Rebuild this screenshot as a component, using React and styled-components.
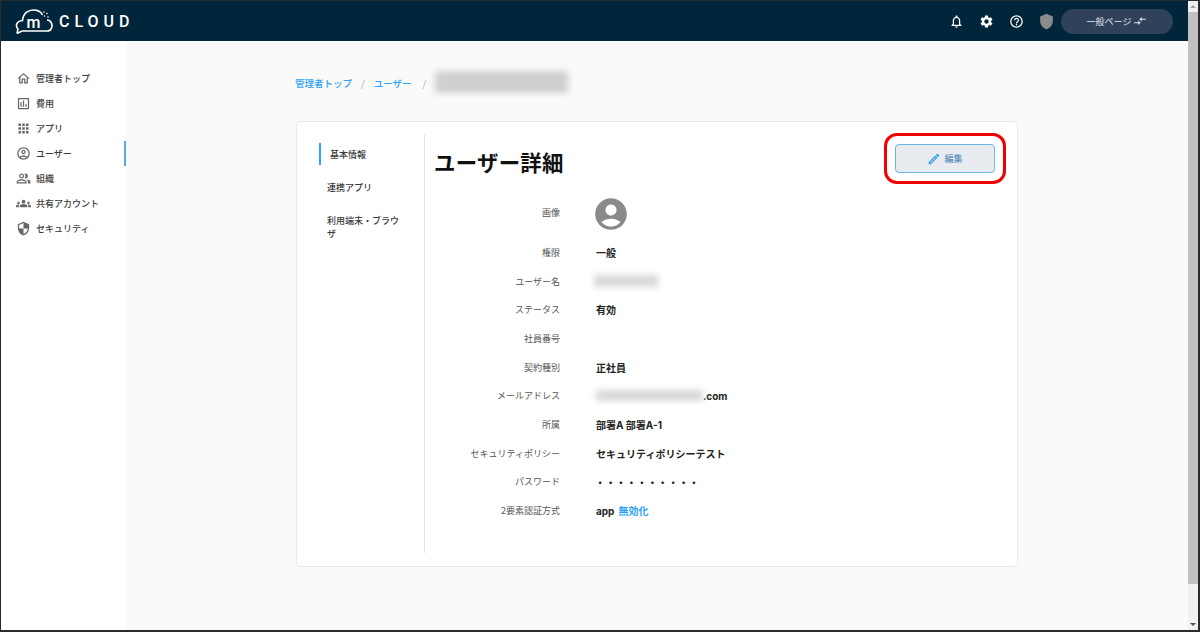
import styled, { createGlobalStyle } from "styled-components";
import {
  MdOutlineHome,
  MdOutlineAssessment,
  MdApps,
  MdOutlineAccountCircle,
  MdOutlinePeopleAlt,
  MdGroups,
  MdSecurity,
  MdOutlineNotifications,
  MdSettings,
  MdHelpOutline,
  MdShield,
  MdCompareArrows,
  MdOutlineEdit,
  MdAccountCircle,
} from "react-icons/md";

const GlobalStyle = createGlobalStyle`
  html, body { margin: 0; padding: 0; background: #fff; }
  body {
    font-family: "Noto Sans CJK JP", "Noto Sans", "Liberation Sans", sans-serif;
    overflow: hidden;
  }
  * { box-sizing: border-box; }
`;

const Frame = styled.div`
  width: 1200px;
  height: 632px;
  display: flex;
  border-style: solid;
  border-color: #2b2b2b;
  border-width: 1px 2px 2px 1px;
  overflow: hidden;
`;

const Page = styled.div`
  flex: 1;
  min-width: 0;
  display: flex;
  flex-direction: column;
`;

const Scrollbar = styled.div`
  width: 10px;
  display: flex;
  flex-direction: column;
  align-items: center;
  background: #f1f1f1;
`;

const ScrollArrow = styled.div`
  height: 11px;
  display: flex;
  align-items: center;
  justify-content: center;
  margin-top: ${(props) => (props.$down ? "auto" : "0")};

  &::before {
    content: "";
    border-left: 3px solid transparent;
    border-right: 3px solid transparent;
    ${(props) =>
      props.$down
        ? "border-top: 3px solid #505050;"
        : "border-bottom: 3px solid #a3a3a3;"}
  }
`;

const ScrollThumb = styled.div`
  width: 100%;
  height: 572px;
  background: #c1c1c1;
`;

const Header = styled.header`
  height: 40px;
  flex: none;
  background: #01263c;
  display: flex;
  align-items: center;
  padding: 0 15px 0 14px;
`;

const Logo = styled.div`
  display: flex;
  align-items: center;
  gap: 6px;
  color: #fff;
`;

const LogoText = styled.span`
  font-family: Roboto, "Liberation Sans", sans-serif;
  font-size: 16px;
  font-weight: 500;
  letter-spacing: 5px;
`;

const HeaderActions = styled.div`
  margin-left: auto;
  display: flex;
  align-items: center;
`;

const HeaderIcon = styled.span`
  width: 30px;
  display: flex;
  justify-content: center;
  color: ${(props) => props.$color || "#fff"};
  font-size: ${(props) => props.$size || 15}px;
`;

const SwitchButton = styled.button`
  width: 112px;
  height: 25px;
  border: 0;
  border-radius: 13px;
  background: #2f4259;
  color: #e2e5e9;
  font: 400 9px "Noto Sans CJK JP", sans-serif;
  display: flex;
  align-items: center;
  justify-content: center;
  gap: 2px;
  padding: 0;
`;

const Body = styled.div`
  flex: 1;
  min-height: 0;
  display: flex;
`;

const Sidebar = styled.nav`
  width: 125px;
  flex: none;
  padding-top: 25px;
  background: #fff;
  box-shadow: 1px 0 2px rgba(0, 0, 0, 0.12);
`;

const NavItem = styled.div`
  height: 25px;
  display: flex;
  align-items: center;
  gap: 5px;
  padding-left: 15px;
  font-size: 9px;
  font-weight: 500;
  color: #3c3c3c;
  border-right: 2px solid ${(props) => (props.$active ? "#5aa9e6" : "transparent")};
`;

const NavIcon = styled.span`
  width: 15px;
  display: flex;
  justify-content: center;
  font-size: 15px;
  color: #666;
`;

const Main = styled.main`
  flex: 1;
  min-width: 0;
  background: #fafafa;
  padding: 28px 170px 0;
`;

const Breadcrumb = styled.div`
  height: 25px;
  margin-left: -1px;
  display: flex;
  align-items: center;
  font-size: 9.5px;
  color: #2aa4f4;
`;

const Crumb = styled.span`
  font-weight: 500;
  padding-top: 2px;
`;

const Slash = styled.span`
  color: #aaa;
  padding-top: 2px;
  margin: 0 ${(props) => props.$after}px 0 ${(props) => props.$before}px;
`;

const Blur = styled.span`
  display: block;
  width: ${(props) => props.$w}px;
  height: ${(props) => props.$h}px;
  margin-left: ${(props) => props.$left || 0}px;
  background: ${(props) => props.$color || "#d8d8d8"};
  filter: blur(3px);
`;

const Card = styled.section`
  height: 446px;
  margin-top: 27px;
  padding: 12px 22px 13px;
  display: flex;
  background: #fff;
  border: 1px solid #eaeaea;
  border-radius: 5px;
`;

const Tabs = styled.div`
  width: 106px;
  flex: none;
  padding-top: 9px;
  border-right: 1px solid #e4e4e4;
`;

const Tab = styled.div`
  width: 84px;
  font-size: 9px;
  font-weight: 500;
  line-height: 13px;
  color: #3a3a3a;
  margin-bottom: ${(props) => props.$gap || 0}px;
  padding: ${(props) => (props.$active ? "5px 0 4px 9px" : "0 0 0 8px")};
  border-left: ${(props) => (props.$active ? "2px solid #2aa7ff" : "0")};
`;

const Detail = styled.div`
  flex: 1;
  min-width: 0;
  padding: 10px 0 0 9px;
`;

const DetailHead = styled.div`
  display: flex;
  align-items: flex-start;
  justify-content: space-between;
`;

const Title = styled.h1`
  margin: 3px 0 0;
  font-size: 21.4px;
  letter-spacing: 0.3px;
  line-height: 30px;
  font-weight: 700;
  color: #111;
`;

const EditWrap = styled.div`
  position: relative;
`;

const EditButton = styled.button`
  width: 100px;
  height: 29px;
  border: 1px solid #6fb3e3;
  border-radius: 4px;
  background: #e8ecf1;
  color: #5f93bb;
  font: 500 9px "Noto Sans CJK JP", sans-serif;
  display: flex;
  align-items: center;
  justify-content: center;
  gap: 3px;
  padding: 0;

  svg {
    font-size: 14px;
    color: #2f9be6;
  }
`;

const Highlight = styled.span`
  position: absolute;
  inset: -11px;
  border: 3px solid #f00000;
  border-radius: 13px;
  pointer-events: none;
`;

const Rows = styled.div`
  margin-top: 16px;
`;

const Row = styled.div`
  display: grid;
  grid-template-columns: 126px 1fr;
  column-gap: 36px;
  align-items: center;
  height: ${(props) => (props.$tall ? 45 : 28.7)}px;
  padding-bottom: ${(props) => (props.$tall ? 4 : 0)}px;
`;

const Label = styled.div`
  font-size: 9px;
  color: #555;
  text-align: right;
  margin-bottom: ${(props) => (props.$raised ? 2 : 0)}px;
`;

const Value = styled.div`
  display: flex;
  align-items: center;
  font-family: Inter, "Noto Sans CJK JP", sans-serif;
  font-size: 10px;
  font-weight: 700;
  color: #222;
`;

const Dots = styled.span`
  font-size: 8px;
  font-weight: 500;
  letter-spacing: 6.16px;
  margin-left: 2px;
`;

const ValueLink = styled.span`
  color: #2aa4f4;
  margin-left: 4px;
`;

const Avatar = styled(MdAccountCircle)`
  display: block;
  font-size: 38px;
  color: #8a8a8a;
  margin-left: -4px;
`;

const LogoMark = () => (
  <svg width="38" height="25" viewBox="0 0 38 25" fill="none" stroke="#fff" strokeWidth="1.6">
    <path d="M2 24.5 L3 20 C0 17 1.5 12 7.5 11.5 C8 4 14 1 18 1 C22 1 26 2.5 27.5 6" />
    <path d="M32 11 C36 11 38 16 36.5 19 C36 21 34 22 32 22 L7 22 L2 24.5" />
    <text x="18.5" y="19" fill="#fff" stroke="none" fontFamily="Roboto, sans-serif" fontSize="16" fontWeight="500" textAnchor="middle">m</text>
    <g fill="#fff" stroke="none">
      <circle cx="29" cy="3" r="0.8" />
      <circle cx="32" cy="4.5" r="0.8" />
      <circle cx="29.5" cy="7" r="0.8" />
      <circle cx="33" cy="8" r="0.8" />
    </g>
  </svg>
);

const navItems = [
  { icon: <MdOutlineHome />, label: "管理者トップ" },
  { icon: <MdOutlineAssessment />, label: "費用" },
  { icon: <MdApps />, label: "アプリ" },
  { icon: <MdOutlineAccountCircle />, label: "ユーザー", active: true },
  { icon: <MdOutlinePeopleAlt />, label: "組織" },
  { icon: <MdGroups />, label: "共有アカウント" },
  { icon: <MdSecurity />, label: "セキュリティ" },
];

const App = () => {
  return (
    <>
      <GlobalStyle />
      <Frame>
        <Page>
          <Header>
            <Logo>
              <LogoMark />
              <LogoText>CLOUD</LogoText>
            </Logo>
            <HeaderActions>
              <HeaderIcon><MdOutlineNotifications /></HeaderIcon>
              <HeaderIcon><MdSettings /></HeaderIcon>
              <HeaderIcon><MdHelpOutline /></HeaderIcon>
              <HeaderIcon $color="#8b8b8b" $size={17}><MdShield /></HeaderIcon>
              <SwitchButton>
                一般ページ
                <MdCompareArrows size={14} />
              </SwitchButton>
            </HeaderActions>
          </Header>
          <Body>
            <Sidebar>
              {navItems.map((item) => (
                <NavItem key={item.label} $active={item.active}>
                  <NavIcon>{item.icon}</NavIcon>
                  {item.label}
                </NavItem>
              ))}
            </Sidebar>
            <Main>
              <Breadcrumb>
                <Crumb>管理者トップ</Crumb>
                <Slash $before={9} $after={9}>/</Slash>
                <Crumb>ユーザー</Crumb>
                <Slash $before={11} $after={9}>/</Slash>
                <Blur $w={133} $h={22} $color="#cfcfcf" />
              </Breadcrumb>
              <Card>
                <Tabs>
                  <Tab $active $gap={16}>基本情報</Tab>
                  <Tab $gap={20}>連携アプリ</Tab>
                  <Tab>利用端末・ブラウザ</Tab>
                </Tabs>
                <Detail>
                  <DetailHead>
                    <Title>ユーザー詳細</Title>
                    <EditWrap>
                      <EditButton>
                        <MdOutlineEdit />
                        編集
                      </EditButton>
                      <Highlight />
                    </EditWrap>
                  </DetailHead>
                  <Rows>
                    <Row $tall>
                      <Label $raised>画像</Label>
                      <Value><Avatar /></Value>
                    </Row>
                    <Row>
                      <Label>権限</Label>
                      <Value>一般</Value>
                    </Row>
                    <Row>
                      <Label>ユーザー名</Label>
                      <Value><Blur $w={64} $h={12} $left={-2} /></Value>
                    </Row>
                    <Row>
                      <Label>ステータス</Label>
                      <Value>有効</Value>
                    </Row>
                    <Row>
                      <Label>社員番号</Label>
                      <Value />
                    </Row>
                    <Row>
                      <Label>契約種別</Label>
                      <Value>正社員</Value>
                    </Row>
                    <Row>
                      <Label>メールアドレス</Label>
                      <Value><Blur $w={107} $h={11} />.com</Value>
                    </Row>
                    <Row>
                      <Label>所属</Label>
                      <Value>部署A 部署A-1</Value>
                    </Row>
                    <Row>
                      <Label>セキュリティポリシー</Label>
                      <Value>セキュリティポリシーテスト</Value>
                    </Row>
                    <Row>
                      <Label>パスワード</Label>
                      <Value><Dots>••••••••••</Dots></Value>
                    </Row>
                    <Row>
                      <Label>2要素認証方式</Label>
                      <Value>app<ValueLink>無効化</ValueLink></Value>
                    </Row>
                  </Rows>
                </Detail>
              </Card>
            </Main>
          </Body>
        </Page>
        <Scrollbar>
          <ScrollArrow />
          <ScrollThumb />
          <ScrollArrow $down />
        </Scrollbar>
      </Frame>
    </>
  );
};

export default App;
